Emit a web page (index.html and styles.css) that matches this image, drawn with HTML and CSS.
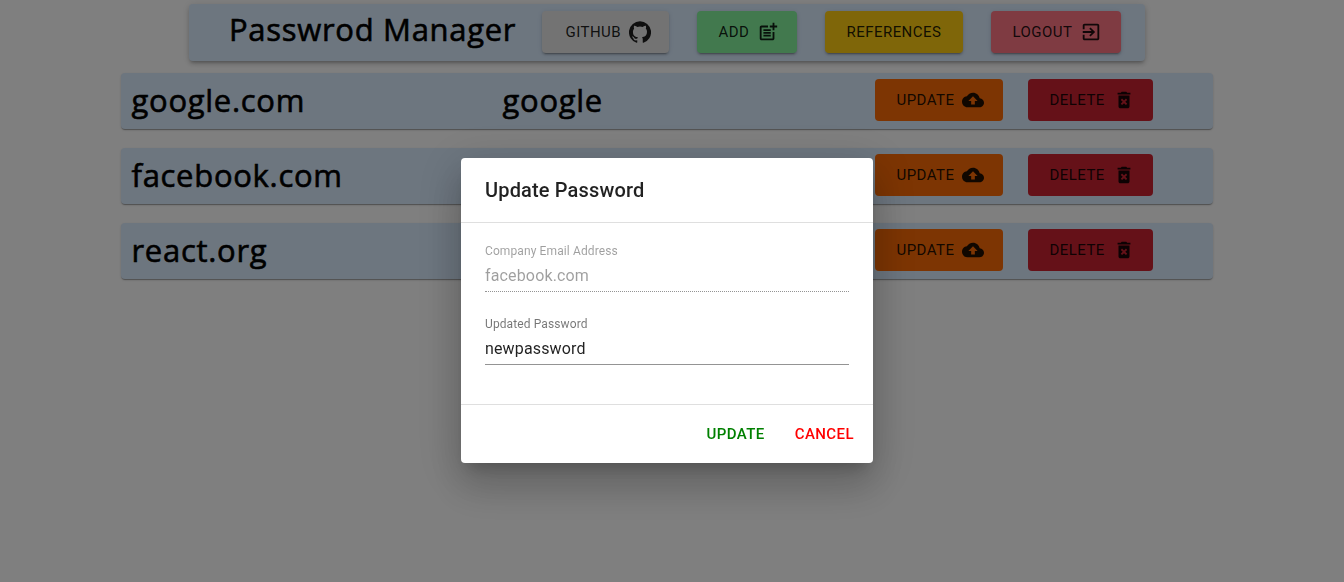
FILE: index.html
```html
<!DOCTYPE html>
<html lang="en">
<head>
<meta charset="utf-8">
<title>Password Manager</title>
<link rel="stylesheet" href="styles.css">
</head>
<body>
<svg class="sprite" aria-hidden="true">
  <symbol id="cloud" viewBox="0 0 24 24"><path d="M19.35 10.04C18.67 6.59 15.64 4 12 4 9.11 4 6.6 5.64 5.35 8.04 2.34 8.36 0 10.91 0 14c0 3.31 2.69 6 6 6h13c2.76 0 5-2.24 5-5 0-2.64-2.05-4.78-4.65-4.96zM14 13v4h-4v-4H7l5-5 5 5h-3z"/></symbol>
  <symbol id="trash" viewBox="0 0 24 24"><path d="M6 19c0 1.1.9 2 2 2h8c1.1 0 2-.9 2-2V7H6v12zm2.46-7.12l1.41-1.41L12 12.59l2.12-2.12 1.41 1.41L13.41 14l2.12 2.12-1.41 1.41L12 15.41l-2.12 2.12-1.41-1.41L10.59 14l-2.13-2.12zM15.5 4l-1-1h-5l-1 1H5v2h14V4z"/></symbol>
</svg>
<header class="topbar">
  <h1 class="brand">Passwrod Manager</h1>
  <nav class="nav">
    <button class="btn raised github">GITHUB<svg class="icon" viewBox="0 0 24 24"><path d="M12 .3a12 12 0 0 0-3.8 23.4c.6.1.8-.3.8-.6v-2c-3.3.7-4-1.6-4-1.6-.6-1.4-1.4-1.8-1.4-1.8-1-.7.1-.7.1-.7 1.2 0 1.9 1.2 1.9 1.2 1 1.8 2.8 1.3 3.5 1 0-.8.4-1.3.7-1.6-2.7-.3-5.5-1.3-5.5-6 0-1.2.5-2.3 1.3-3.1-.2-.4-.6-1.6 0-3.2 0 0 1-.3 3.4 1.2a11.5 11.5 0 0 1 6 0c2.3-1.5 3.3-1.2 3.3-1.2.6 1.6.2 2.8 0 3.2.9.8 1.3 1.9 1.3 3.2 0 4.6-2.8 5.6-5.5 5.9.5.4.9 1 .9 2.2v3.3c0 .3.1.7.8.6A12 12 0 0 0 12 .3"/></svg></button>
    <button class="btn raised add">ADD<svg class="icon" viewBox="0 0 24 24"><path d="M17 19.22H5V7h7V5H5c-1.1 0-2 .9-2 2v12c0 1.1.9 2 2 2h12c1.1 0 2-.9 2-2v-7h-2v7.22z"/><path d="M19 2h-2v3h-3c.01.01 0 2 0 2h3v2.99c.01.01 2 0 2 0V7h3V5h-3V2zM7 9h8v2H7zM7 12v2h8v-2h-3zM7 15h8v2H7z"/></svg></button>
    <button class="btn raised refs">REFERENCES</button>
    <button class="btn raised logout">LOGOUT<svg class="icon" viewBox="0 0 24 24"><path d="M10.09 15.59L11.5 17l5-5-5-5-1.41 1.41L12.67 11H3v2h9.67l-2.58 2.59zM19 3H5c-1.11 0-2 .9-2 2v4h2V5h14v14H5v-4H3v4c0 1.1.89 2 2 2h14c1.1 0 2-.9 2-2V5c0-1.1-.9-2-2-2z"/></svg></button>
  </nav>
</header>
<main class="list">
  <section class="entry">
    <span class="site">google.com</span><span class="secret">google</span>
    <button class="btn update">UPDATE<svg class="icon"><use href="#cloud"/></svg></button>
    <button class="btn delete">DELETE<svg class="icon"><use href="#trash"/></svg></button>
  </section>
  <section class="entry">
    <span class="site">facebook.com</span><span class="secret"></span>
    <button class="btn update">UPDATE<svg class="icon"><use href="#cloud"/></svg></button>
    <button class="btn delete">DELETE<svg class="icon"><use href="#trash"/></svg></button>
  </section>
  <section class="entry">
    <span class="site">react.org</span><span class="secret"></span>
    <button class="btn update">UPDATE<svg class="icon"><use href="#cloud"/></svg></button>
    <button class="btn delete">DELETE<svg class="icon"><use href="#trash"/></svg></button>
  </section>
</main>
<div class="backdrop">
  <div class="dialog" role="dialog">
    <h2 class="dialog-title">Update Password</h2>
    <div class="dialog-body">
      <div class="field disabled"><span class="label">Company Email Address</span><span class="value">facebook.com</span></div>
      <div class="field"><span class="label">Updated Password</span><span class="value">newpassword</span></div>
    </div>
    <div class="dialog-actions">
      <button class="action confirm">UPDATE</button>
      <button class="action cancel">CANCEL</button>
    </div>
  </div>
</div>
</body>
</html>
```
FILE: styles.css
```css
* { box-sizing: border-box; }
body { margin: 0; height: 582px; overflow: hidden; background: #fff; font-family: Roboto, sans-serif; }
.sprite { display: none; }
.topbar {
  display: flex; align-items: center; width: 956px; height: 57px; margin: 4px 0 0 189px;
  padding: 0 24px 2px 40px; background: #daecff; border-radius: 4px;
  box-shadow: 0 3px 3px -2px rgba(0,0,0,.2), 0 3px 4px rgba(0,0,0,.14), 0 1px 8px rgba(0,0,0,.12);
}
.brand, .site, .secret { font: 500 31px/39px "Open Sans", sans-serif; letter-spacing: .7px; -webkit-text-stroke: .6px #000; }
.brand { margin: 0 0 4px; white-space: nowrap; }
.nav { display: flex; gap: 28px; margin-left: auto; }
.btn {
  display: flex; align-items: center; height: 42px; padding: 0 18px 0 21.5px; border: 0; border-radius: 4px;
  font: 450 15px/26px Roboto, sans-serif; letter-spacing: .46px; color: rgba(0,0,0,.87); white-space: nowrap;
}
.icon { width: 22px; height: 22px; margin-left: 8px; fill: currentColor; flex: none; }
.raised { box-shadow: 0 3px 1px -2px rgba(0,0,0,.2), 0 2px 2px rgba(0,0,0,.14), 0 1px 5px rgba(0,0,0,.12); }
.github { width: 127px; padding-left: 23.5px; background: #e6e6e6; }
.add { width: 100px; background: #84f39d; }
.refs { width: 138px; background: #ffcd12; }
.logout { width: 130px; background: #ff7685; }
.list { display: flex; flex-direction: column; gap: 19px; width: 1092px; margin: 12px 0 0 121px; }
.entry {
  display: grid; grid-template-columns: 371px 372.5px 153px auto; align-items: center; justify-items: start;
  height: 56px; padding: 0 0 2px 10.5px; background: #daecff; border-radius: 4px;
  box-shadow: 0 2px 1px -1px rgba(0,0,0,.2), 0 1px 1px rgba(0,0,0,.14), 0 1px 3px rgba(0,0,0,.12);
}
.update { width: 128px; background: #fa6a06; }
.delete { width: 125px; background: #cb2231; }
.backdrop { position: fixed; inset: 0; background: rgba(0,0,0,.5); }
.dialog {
  position: absolute; left: 461px; top: 158px; display: flex; flex-direction: column;
  width: 412px; height: 305px; background: #fff; border-radius: 4px; color: rgba(0,0,0,.87);
  box-shadow: 0 11px 15px -7px rgba(0,0,0,.2), 0 24px 38px 3px rgba(0,0,0,.14), 0 9px 46px 8px rgba(0,0,0,.12);
}
.dialog-title { margin: 0; padding: 16px 24px; font-size: 20px; font-weight: 500; line-height: 32px; letter-spacing: .15px; }
.dialog-body {
  display: flex; flex-direction: column; gap: 25px; height: 183px; padding: 20px 24px 0;
  border-top: 1px solid #dfdfdf; border-bottom: 1px solid #dfdfdf;
}
.field { display: flex; flex-direction: column; height: 48px; flex: none; border-bottom: 1px solid #949494; }
.field .label { font-size: 12px; line-height: 14px; letter-spacing: .11px; color: rgba(0,0,0,.54); }
.field .value { padding-top: 8px; font-size: 16px; line-height: 19px; letter-spacing: .15px; }
.disabled { height: 49px; border-bottom: 1px dotted #949494; }
.disabled .label, .disabled .value { color: rgba(0,0,0,.38); }
.disabled .label { padding-top: 1px; }
.dialog-actions { display: flex; flex: 1; align-items: center; justify-content: flex-end; gap: 30px; padding-right: 19px; }
.action { padding: 0; border: 0; background: none; font: 500 15px/26px Roboto, sans-serif; letter-spacing: .43px; }
.confirm { color: green; }
.cancel { color: #f00; }
```
